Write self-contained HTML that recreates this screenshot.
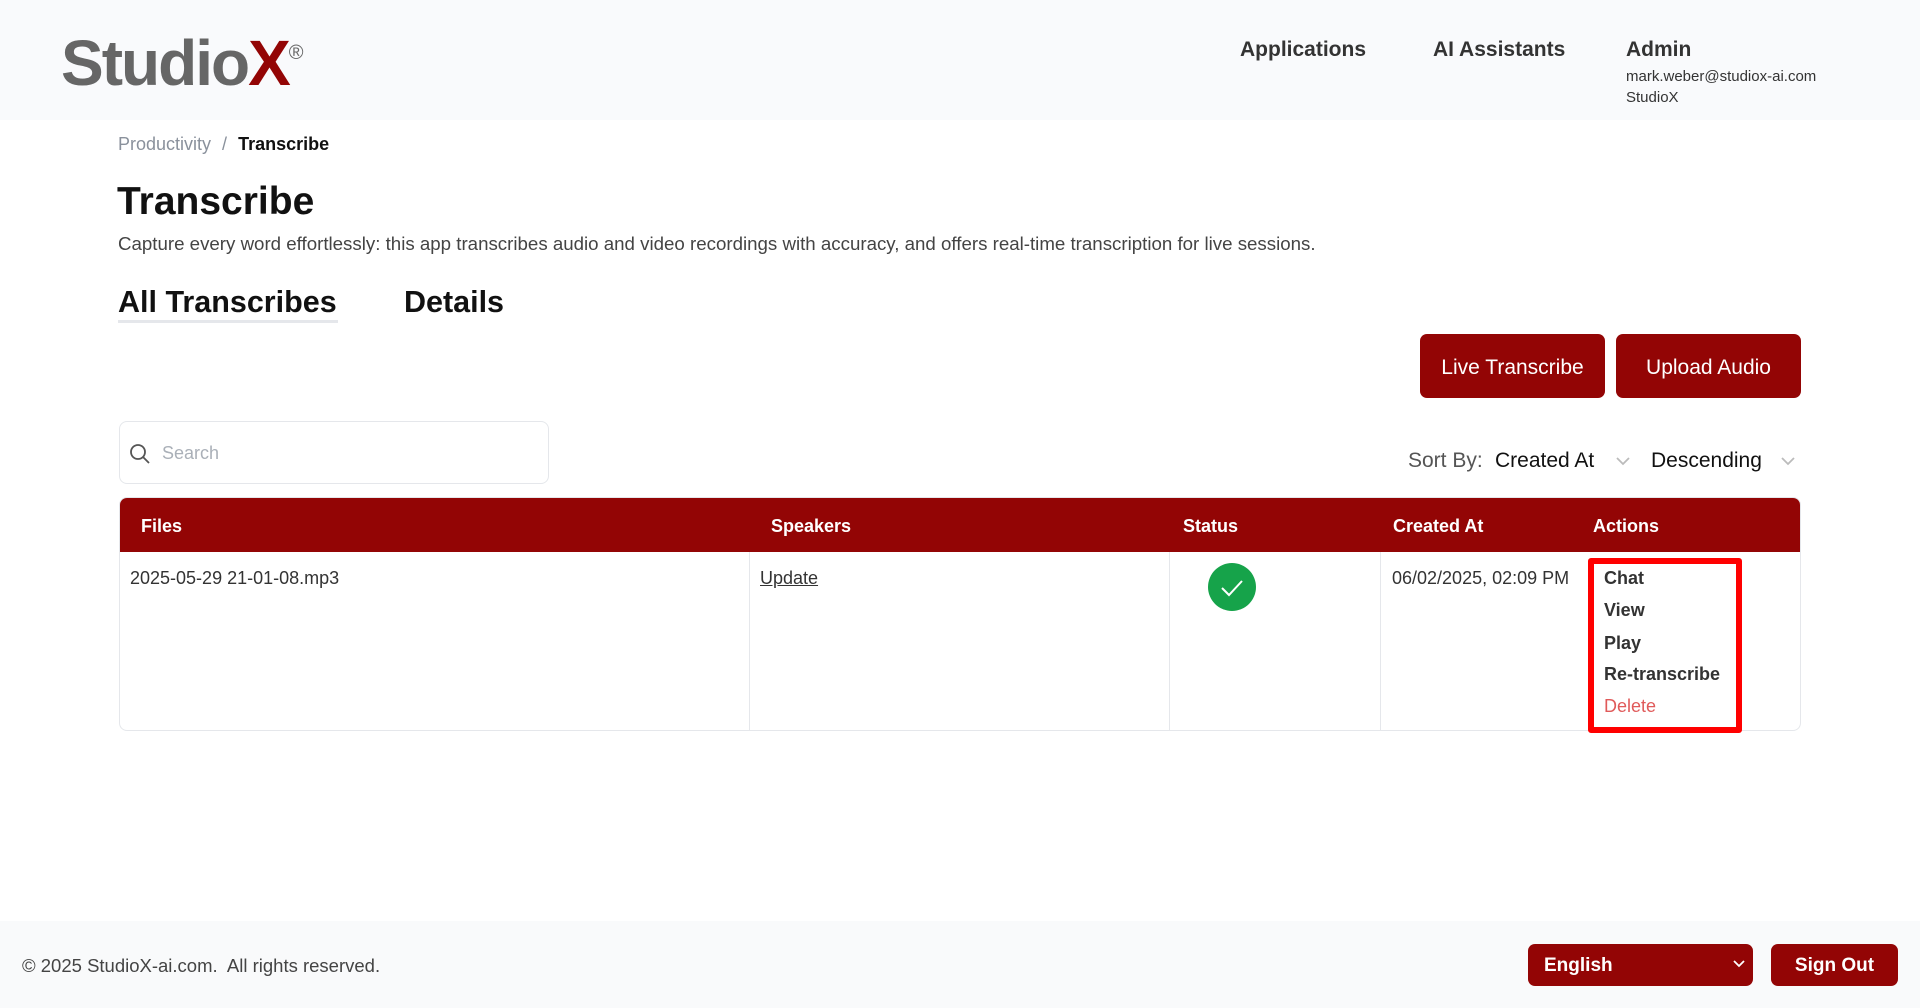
<!DOCTYPE html>
<html><head><meta charset="utf-8"><style>
*{box-sizing:border-box;margin:0;padding:0}
body{width:1920px;height:1008px;position:relative;background:#fff;font-family:"Liberation Sans",sans-serif;color:#111;overflow:hidden}
.a{position:absolute;white-space:nowrap}
header{position:absolute;left:0;top:0;width:1920px;height:120px;background:#f9fafc}
.logo{left:61px;top:26px;font-size:64px;font-weight:bold;color:#666;letter-spacing:-2px}
.logo span{color:#930505}
.logo sup{font-size:20px;color:#666;font-weight:normal;position:relative;top:-4px;letter-spacing:0}
.nav{font-size:21px;font-weight:bold;color:#333;top:38px}
.btn{background:#930505;color:#fff;border-radius:7px;display:flex;align-items:center;justify-content:center;font-size:21px}
.act{left:1604px;font-size:18px;color:#333}
</style></head><body>
<header>
<div class="a logo">Studio<span>X</span><sup>®</sup></div>
<div class="a nav" style="left:1240px">Applications</div>
<div class="a nav" style="left:1433px">AI Assistants</div>
<div class="a nav" style="left:1626px">Admin</div>
<div class="a" style="left:1626px;top:68px;font-size:15px;color:#333">mark.weber@studiox-ai.com</div>
<div class="a" style="left:1626px;top:89px;font-size:15px;color:#333">StudioX</div>
</header>
<div class="a" style="left:118px;top:134px;font-size:18px;color:#8a919c">Productivity <span style="margin:0 6px">/</span> <span style="color:#111;font-weight:bold">Transcribe</span></div>
<div class="a" style="left:117px;top:180px;font-size:39px;font-weight:bold">Transcribe</div>
<div class="a" style="left:118px;top:233px;font-size:18.7px;color:#444">Capture every word effortlessly: this app transcribes audio and video recordings with accuracy, and offers real-time transcription for live sessions.</div>
<div class="a" style="left:118px;top:285px;font-size:30.5px;font-weight:bold">All Transcribes</div>
<div class="a" style="left:118px;top:320px;width:220px;height:3px;background:#e5e7eb"></div>
<div class="a" style="left:404px;top:285px;font-size:30.5px;font-weight:bold">Details</div>
<div class="a btn" style="left:1420px;top:334px;width:185px;height:64px;padding-top:3px">Live Transcribe</div>
<div class="a btn" style="left:1616px;top:334px;width:185px;height:64px;padding-top:3px">Upload Audio</div>
<div class="a" style="left:119px;top:421px;width:430px;height:63px;border:1px solid #e5e7eb;border-radius:8px"></div>
<svg class="a" style="left:129px;top:443px" width="22" height="22" viewBox="0 0 22 22"><circle cx="9" cy="9" r="7" fill="none" stroke="#555" stroke-width="1.8"/><path d="M14 14l6 6" stroke="#555" stroke-width="1.8"/></svg>
<div class="a" style="left:162px;top:443px;font-size:18px;color:#aab0b8">Search</div>
<div class="a" style="left:1408px;top:449px;font-size:21px;color:#555">Sort By:</div>
<div class="a" style="left:1495px;top:449px;font-size:21px;color:#111">Created At</div>
<svg class="a" style="left:1615px;top:455px" width="16" height="12"><path d="M2 3l6 6 6-6" fill="none" stroke="#bbb" stroke-width="1.8"/></svg>
<div class="a" style="left:1651px;top:449px;font-size:21px;color:#111">Descending</div>
<svg class="a" style="left:1780px;top:455px" width="16" height="12"><path d="M2 3l6 6 6-6" fill="none" stroke="#bbb" stroke-width="1.8"/></svg>
<div class="a" style="left:119px;top:497px;width:1682px;height:234px;border:1px solid #e5e7eb;border-radius:8px;overflow:hidden">
<div style="height:54px;background:#930505"></div>
<div class="a" style="left:629px;top:54px;width:1px;height:180px;background:#e5e7eb"></div>
<div class="a" style="left:1049px;top:54px;width:1px;height:180px;background:#e5e7eb"></div>
<div class="a" style="left:1260px;top:54px;width:1px;height:180px;background:#e5e7eb"></div>
</div>
<div class="a" style="left:141px;top:516px;font-size:18px;font-weight:bold;color:#fff">Files</div>
<div class="a" style="left:771px;top:516px;font-size:18px;font-weight:bold;color:#fff">Speakers</div>
<div class="a" style="left:1183px;top:516px;font-size:18px;font-weight:bold;color:#fff">Status</div>
<div class="a" style="left:1393px;top:516px;font-size:18px;font-weight:bold;color:#fff">Created At</div>
<div class="a" style="left:1593px;top:516px;font-size:18px;font-weight:bold;color:#fff">Actions</div>
<div class="a" style="left:130px;top:568px;font-size:18px;color:#333">2025-05-29 21-01-08.mp3</div>
<div class="a" style="left:760px;top:568px;font-size:18px;color:#333;text-decoration:underline">Update</div>
<svg class="a" style="left:1208px;top:563px" width="48" height="48"><circle cx="24" cy="24" r="24" fill="#16a34a"/><path d="M14 25l7 7 13-14" fill="none" stroke="#fff" stroke-width="2"/></svg>
<div class="a" style="left:1392px;top:568px;font-size:18px;color:#333">06/02/2025, 02:09 PM</div>
<div class="a" style="left:1588px;top:558px;width:154px;height:175px;border:6px solid #ff0000;border-radius:3px"></div>
<div class="a act" style="top:568px;font-weight:bold">Chat</div>
<div class="a act" style="top:600px;font-weight:bold">View</div>
<div class="a act" style="top:633px;font-weight:bold">Play</div>
<div class="a act" style="top:664px;font-weight:bold">Re-transcribe</div>
<div class="a act" style="top:696px;color:#e05a5a">Delete</div>
<div class="a" style="left:0;top:921px;width:1920px;height:87px;background:#f9fafb"></div>
<div class="a" style="left:22px;top:955px;font-size:18.5px;color:#444">© 2025 StudioX-ai.com.&nbsp; All rights reserved.</div>
<div class="a btn" style="left:1528px;top:944px;width:225px;height:42px;justify-content:flex-start;padding-left:16px;padding-top:2px;font-size:19px;font-weight:bold">English</div>
<svg class="a" style="left:1733px;top:959px" width="12" height="10"><path d="M1 2l5 5 5-5" fill="none" stroke="#fff" stroke-width="1.8"/></svg>
<div class="a btn" style="left:1771px;top:944px;width:127px;height:42px;padding-top:2px;font-size:19px;font-weight:bold">Sign Out</div>
</body></html>
